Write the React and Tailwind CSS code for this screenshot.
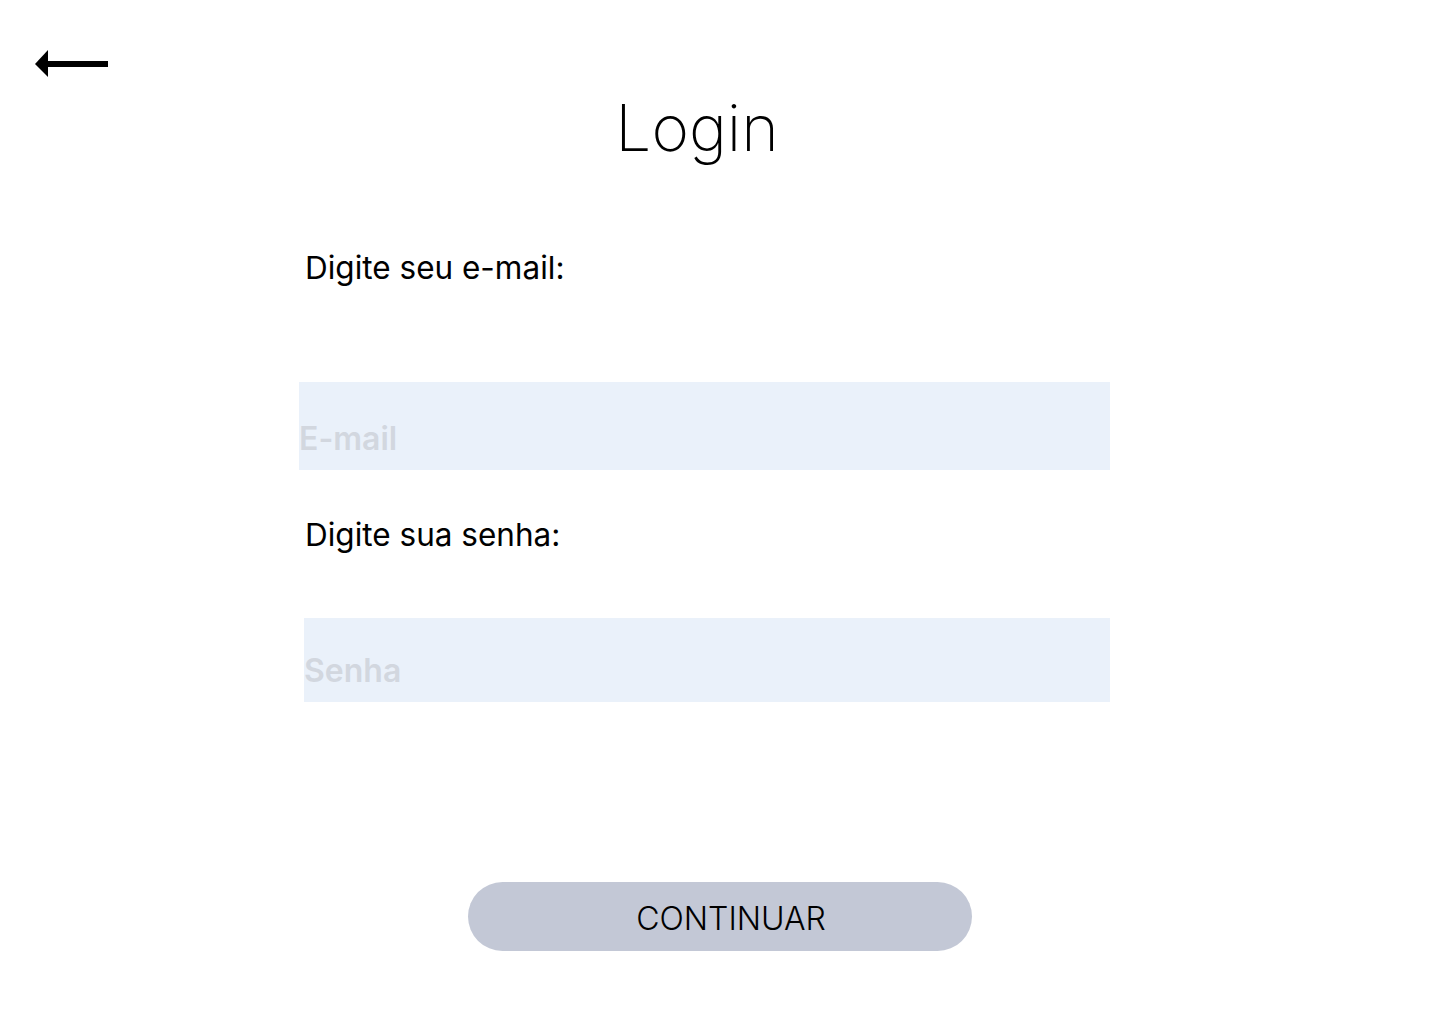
export default function App() {
  return (
    <div className="min-h-screen w-[1440px] bg-white font-['Inter',sans-serif] text-black">
      <div className="pt-[50px] pl-[35px]">
        <svg width="74" height="27" viewBox="0 0 74 27" fill="none">
          <path d="M0 14 L13 0 L13 27 Z" fill="black" />
          <rect x="12" y="11" width="61" height="6" fill="black" />
        </svg>
      </div>
      <h1 className="mt-[19px] pr-[46px] text-center text-[64px] leading-none font-extralight">Login</h1>
      <div className="ml-[299px] w-[811px]">
        <p className="ml-[6px] mt-[92px] text-[31.5px] leading-[32px]">Digite seu e-mail:</p>
        <div className="mt-[98px] flex h-[88px] items-end bg-[#eaf1fa] pb-[15px]">
          <span className="text-[32px] leading-none font-semibold text-[#d2d7df]">E-mail</span>
        </div>
        <p className="ml-[6px] mt-[49px] text-[31.5px] leading-[32px]">Digite sua senha:</p>
        <div className="ml-[5px] mt-[67px] flex h-[84px] items-end bg-[#eaf1fa] pb-[15px]">
          <span className="text-[32px] leading-none font-semibold text-[#d2d7df]">Senha</span>
        </div>
      </div>
      <div className="ml-[468px] mt-[180px] flex h-[69px] w-[504px] items-center justify-center rounded-full bg-[#c3c8d6] pl-[22px] pt-[5px]">
        <span className="text-[32px] font-light leading-none">CONTINUAR</span>
      </div>
    </div>
  );
}
